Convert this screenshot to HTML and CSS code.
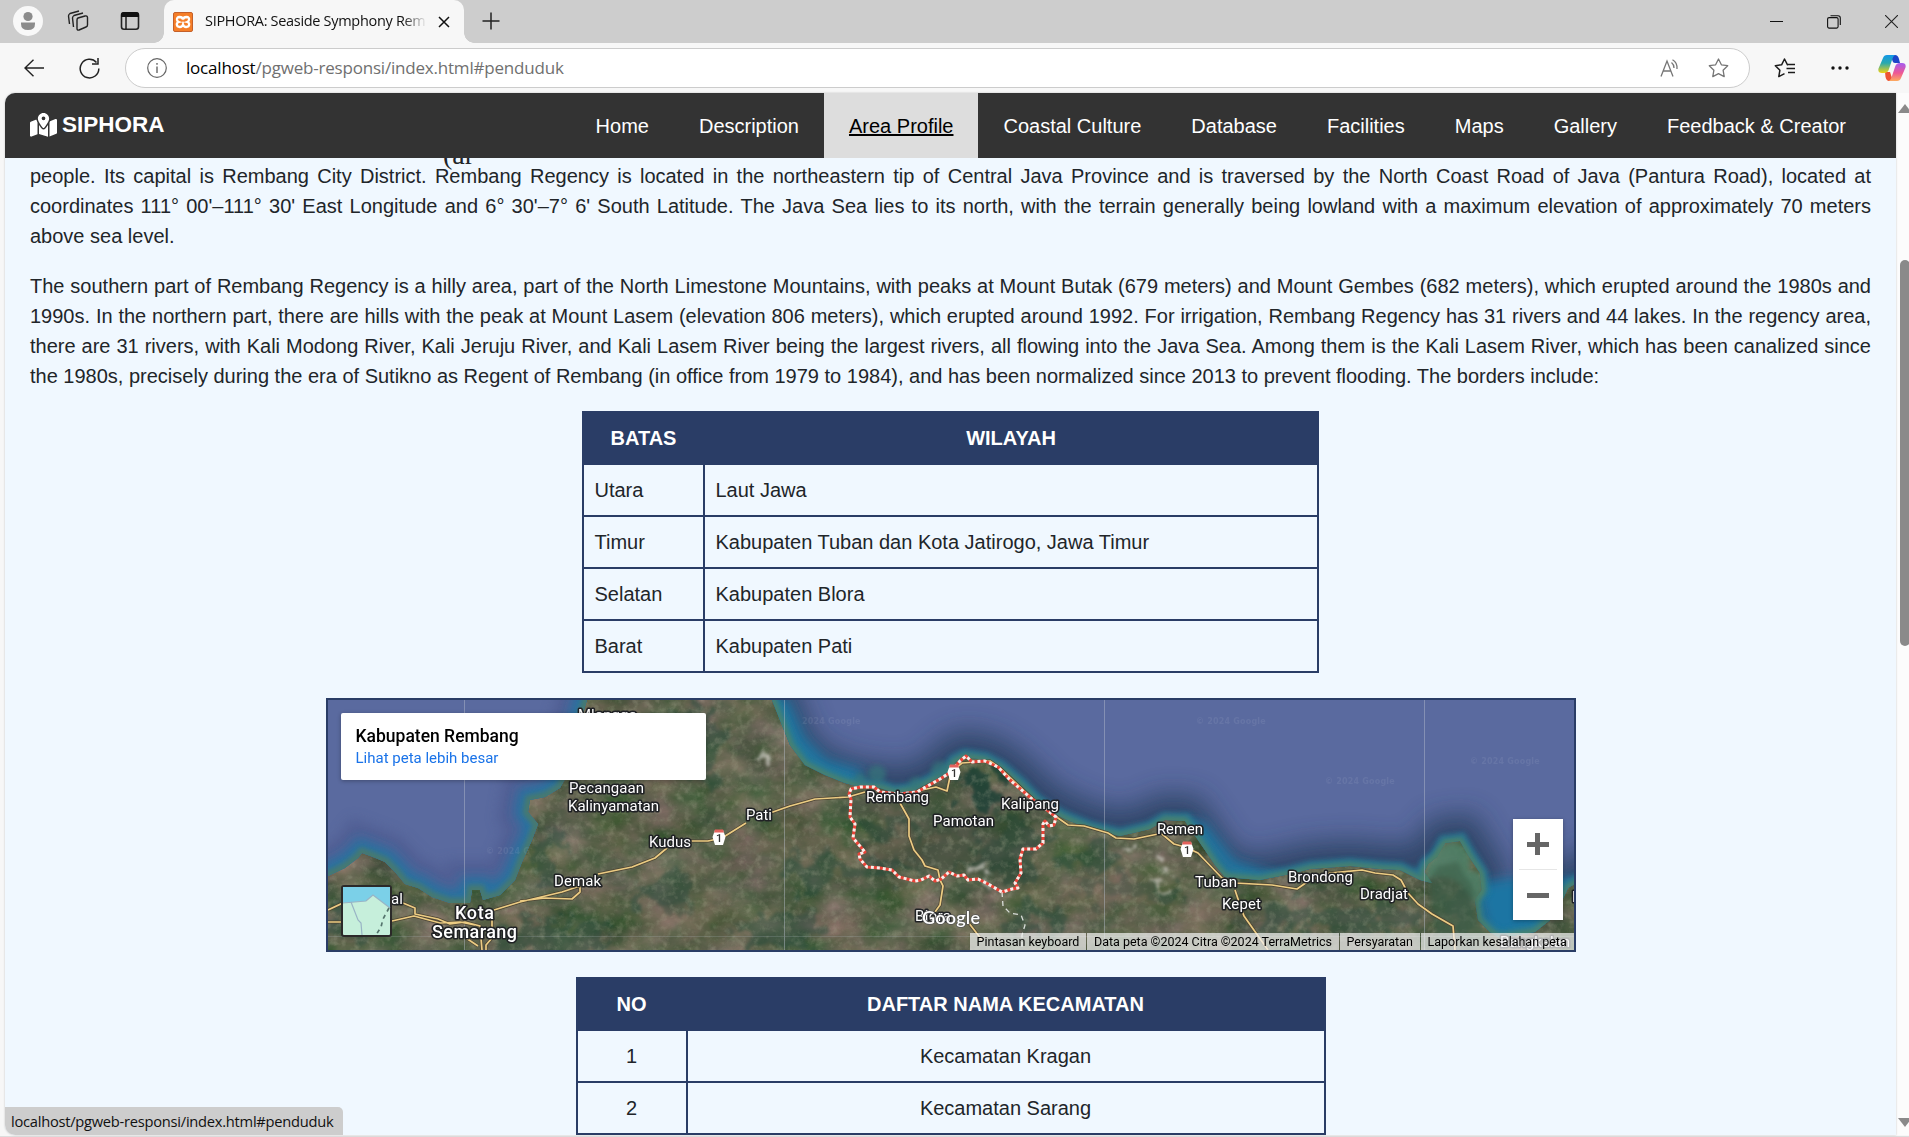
FILE: index.html
```html
<!DOCTYPE html>
<html lang="en">
<head>
<meta charset="utf-8">
<title>SIPHORA: Seaside Symphony Rembang</title>
<link rel="stylesheet" href="styles.css">
</head>
<body>
<header class="tabstrip">
  <div class="tab-tools">
    <svg class="avatar" width="30" height="30" viewBox="0 0 30 30"><circle cx="15" cy="15" r="15" fill="#f8f8f8"/><circle cx="15" cy="10.5" r="4.6" fill="#8c8c8c"/><path d="M8 16.5h14v1.5q0 6-7 6t-7-6z" fill="#8c8c8c"/></svg>
    <svg class="spaces" width="22" height="22" viewBox="0 0 22 22" fill="none" stroke="#222" stroke-width="1.4" stroke-linejoin="round"><path d="M11 8 18 6q2.300-.5 2.500 1.500V15q0 1.500-1.500 2l-7 3q-2 .5-2-1.500V10q0-1.500 1-2z"/><path d="M6.500 17 5.500 8Q5.500 6.500 7 5.500L16 3M2.500 14 1.500 6Q1.500 4.500 3 3.500L12 1"/></svg>
    <svg class="panel" width="20" height="20" viewBox="0 0 20 20"><rect x="1.500" y="1.800" width="17" height="16.500" rx="2.500" fill="none" stroke="#222" stroke-width="1.600"/><path d="M1 6V4q0-3 3-3h12q3 0 3 3v2zM5.300 6h1.400v12H5.300z" fill="#111"/></svg>
  </div>
  <div class="tab">
    <svg width="20" height="20" viewBox="0 0 20 20"><rect x=".5" y=".5" width="19" height="19" rx="1.500" fill="#f57e28" stroke="#c4602a"/><path d="M6.500 5q3 0 3.500 2.500Q10.500 5 13.500 5q3 .2 2.500 2.700-.3 1.800-1.800 2.300 2 .5 2 2.500-.2 2.500-3 2.500-2.500 0-3.200-2.500Q9.300 15 6.800 15q-2.800 0-3-2.500 0-2 2-2.500Q4.300 9.500 4 7.700 3.700 5.200 6.500 5z" fill="none" stroke="#fff" stroke-width="2.300"/></svg>
    <span class="tab-title">SIPHORA: Seaside Symphony Rem</span>
    <svg class="tab-close" width="12" height="12" viewBox="0 0 12 12" stroke="#111" stroke-width="1.500"><path d="M1 1 11 11M11 1 1 11"/></svg>
  </div>
  <svg class="new-tab" width="18" height="18" viewBox="0 0 18 18" stroke="#222" stroke-width="1.500"><path d="M9 .5v17M.5 9h17"/></svg>
  <div class="window-buttons">
    <svg width="13" height="13" viewBox="0 0 13 13" stroke="#111"><path d="M0 6.500h13"/></svg>
    <svg width="14" height="14" viewBox="0 0 14 14" fill="none" stroke="#111" stroke-width="1.100"><rect x=".6" y="2.600" width="10.500" height="10.500" rx="1.500"/><path d="M3.500.7H11q2.300 0 2.300 2.300v7"/></svg>
    <svg width="13" height="13" viewBox="0 0 13 13" stroke="#222" stroke-width="1.100"><path d="M0 0 13 13M13 0 0 13"/></svg>
  </div>
</header>
<div class="toolbar">
  <svg class="back" width="20" height="18" viewBox="0 0 20 18" fill="none" stroke="#222" stroke-width="1.400"><path d="M9.500.8 1 9l8.500 8.200M1 9h19"/></svg>
  <svg class="reload" width="21" height="21" viewBox="0 0 21 21" fill="none" stroke="#222" stroke-width="1.500"><path d="M19.800 10.500A9.300 9.300 0 1 1 17.500 4.500M19 0v6h-6"/></svg>
  <div class="address">
    <svg width="20" height="20" viewBox="0 0 20 20" fill="none" stroke="#666" stroke-width="1.200"><circle cx="10" cy="10" r="9.300"/><path d="M10 8.500V15M10 5v1.800" stroke-width="1.400"/></svg>
    <span class="url"><b>localhost</b>/pgweb-responsi/index.html#penduduk</span>
    <svg class="read" width="20" height="18" viewBox="0 0 20 18" fill="none" stroke="#767676" stroke-width="1.300"><path d="M1 17.500 7 2l6 15.500M3 12h8M11.500 3.500Q14 5.500 14 9M12.500.8Q17.500 3.500 17 10"/></svg>
    <svg class="star" width="21" height="20" viewBox="0 0 21 20" fill="none" stroke="#767676" stroke-width="1.300" stroke-linejoin="round"><path d="m10.500 1 2.900 5.800 6.300.9-4.600 4.500 1.100 6.400-5.700-3-5.700 3 1.100-6.400L1.300 7.700l6.300-.9z"/></svg>
  </div>
  <svg class="favorites" width="22" height="20" viewBox="0 0 22 20" fill="none" stroke="#1c1c1c" stroke-width="1.500" stroke-linejoin="round"><path d="M14 6.800h-.5L10.500 1 7.600 6.800l-6.300.9 4.600 4.500-1.100 6.400 5.700-3M14 6.500h7M12.500 10.500H21M14 14.500h7"/></svg>
  <svg class="more" width="18" height="4" viewBox="0 0 18 4" fill="#111"><circle cx="2" cy="2" r="1.700"/><circle cx="9" cy="2" r="1.700"/><circle cx="16" cy="2" r="1.700"/></svg>
  <svg class="copilot" width="28" height="26" viewBox="0 0 28 26">
    <defs>
      <linearGradient id="cool" x1="0" y1="0" x2="0" y2="1"><stop offset="0" stop-color="#1397e8"/><stop offset=".45" stop-color="#28a9ae"/><stop offset="1" stop-color="#f2d211"/></linearGradient>
      <linearGradient id="warm" x1="0" y1="0" x2="0" y2="1"><stop offset="0" stop-color="#a45cf0"/><stop offset=".55" stop-color="#ee5795"/><stop offset="1" stop-color="#fdab5e"/></linearGradient>
    </defs>
    <path d="M12 0h5q3 0 4 4l1 4h-5q-2 0-2.500-2L13 0z" fill="#1b45c8"/>
    <path d="M7 17h5l2 6q.6 2.500 2 3H11q-2.500 0-3.500-4z" fill="#ee5334"/>
    <path d="M9 0h8q-2 1-3 5l-3 9q-1 4-5 4H4q-4.500 0-3.500-4.500L5 3q1-3 4-3z" fill="url(#cool)"/>
    <path d="M19 26h-8q2-1 3-5l3-9q1-4 5-4h2q4.500 0 3.500 4.500L23 23q-1 3-4 3z" fill="url(#warm)"/>
  </svg>
</div>
<main class="viewport">
  <div class="page">
    <nav class="navbar">
      <a class="brand">
        <svg width="27" height="24" viewBox="0 0 576 512" fill="#fff"><path d="M408 120c0 54.600-73.100 151.900-105.200 192-7.700 9.600-22 9.600-29.600 0C241.100 271.900 168 174.600 168 120 168 53.700 221.700 0 288 0s120 53.700 120 120zm8 80.400c3.500-6.900 6.700-13.800 9.600-20.600.5-1.200 1-2.500 1.500-3.700l116-46.400c15.800-6.300 32.900 5.300 32.900 22.300v270.800c0 9.800-6 18.600-15.100 22.300L416 503V200.400zM137.600 138.300c2.400 14.100 7.200 28.300 12.800 41.500 2.900 6.800 6.100 13.700 9.600 20.600v251.400L32.900 502.700C17.100 509 0 497.400 0 480.400V209.600c0-9.800 6-18.600 15.100-22.300l122.600-49zM327.800 332c13.900-17.400 35.700-45.700 56.200-77v249.300l-192-54.900V255c20.500 31.300 42.300 59.600 56.200 77 20.500 25.600 59.100 25.600 79.600 0zM288 152a40 40 0 1 0 0-80 40 40 0 1 0 0 80z"/></svg>
        SIPHORA</a>
      <a>Home</a><a>Description</a><a class="active">Area Profile</a><a>Coastal Culture</a><a>Database</a><a>Facilities</a><a>Maps</a><a>Gallery</a><a>Feedback &amp; Creator</a>
    </nav>
    <article class="content">
      <span class="script-word">(ar</span>
      <p>people. Its capital is Rembang City District. Rembang Regency is located in the northeastern tip of Central Java Province and is traversed by the North Coast Road of Java (Pantura Road), located at coordinates 111° 00'–111° 30' East Longitude and 6° 30'–7° 6' South Latitude. The Java Sea lies to its north, with the terrain generally being lowland with a maximum elevation of approximately 70 meters above sea level.</p>
      <p>The southern part of Rembang Regency is a hilly area, part of the North Limestone Mountains, with peaks at Mount Butak (679 meters) and Mount Gembes (682 meters), which erupted around the 1980s and 1990s. In the northern part, there are hills with the peak at Mount Lasem (elevation 806 meters), which erupted around 1992. For irrigation, Rembang Regency has 31 rivers and 44 lakes. In the regency area, there are 31 rivers, with Kali Modong River, Kali Jeruju River, and Kali Lasem River being the largest rivers, all flowing into the Java Sea. Among them is the Kali Lasem River, which has been canalized since the 1980s, precisely during the era of Sutikno as Regent of Rembang (in office from 1979 to 1984), and has been normalized since 2013 to prevent flooding. The borders include:</p>
      <table class="borders">
        <colgroup><col class="side"><col></colgroup>
        <thead><tr><th>BATAS</th><th>WILAYAH</th></tr></thead>
        <tbody>
          <tr><td>Utara</td><td>Laut Jawa</td></tr>
          <tr><td>Timur</td><td>Kabupaten Tuban dan Kota Jatirogo, Jawa Timur</td></tr>
          <tr><td>Selatan</td><td>Kabupaten Blora</td></tr>
          <tr><td>Barat</td><td>Kabupaten Pati</td></tr>
        </tbody>
      </table>
      <section class="map">
        <svg class="tiles" width="1246" height="250" viewBox="328 700 1246 250">
          <defs>
            <filter id="relief" x="0" y="0" width="100%" height="100%" color-interpolation-filters="sRGB"><feTurbulence type="fractalNoise" baseFrequency=".022 .032" numOctaves="7" seed="8"/><feColorMatrix values=".46 0 0 0 .13  .2 .1 0 0 .235  .32 0 .06 0 .105  0 0 0 0 1"/></filter>
            <filter id="grain" x="0" y="0" width="100%" height="100%" color-interpolation-filters="sRGB"><feTurbulence type="fractalNoise" baseFrequency=".13" numOctaves="4" seed="21"/><feColorMatrix values="0 0 0 0 .65  0 0 0 0 .66  0 0 0 0 .56  0 2.400 0 0 -1.150"/></filter>
            <filter id="soft3" x="-20%" y="-20%" width="140%" height="140%"><feGaussianBlur stdDeviation="2.500"/></filter>
            <filter id="soft8" x="-20%" y="-20%" width="140%" height="140%"><feGaussianBlur stdDeviation="6"/></filter>
            <filter id="soft16" x="-20%" y="-20%" width="140%" height="140%"><feGaussianBlur stdDeviation="13"/></filter>
            <filter id="patch" x="-5%" y="-20%" width="110%" height="140%" color-interpolation-filters="sRGB"><feTurbulence type="fractalNoise" baseFrequency=".045" numOctaves="5" result="n"/><feDisplacementMap in="SourceGraphic" in2="n" scale="55" xChannelSelector="R" yChannelSelector="G"/><feGaussianBlur stdDeviation="1.800"/></filter>
            <path id="west" d="M150 930 328 876 345 868 358 858 362 853 373 857 385 862 395 872 405 884 418 888 432 897 450 903 470 903 472 890 480 890 483 900 500 895 515 880 522 862 532 840 538 824 528 812 530 800 545 797 560 788 570 770 578 730 587 700 600 500 150 500z"/>
            <path id="east" d="M740 500 770 695 778 715 790 745 805 765 825 775 845 783 860 787 880 788 895 793 915 790 930 782 948 773 955 762 965 757 985 760 1000 768 1020 785 1035 801 1050 811 1065 819 1090 829 1120 836 1150 829 1165 820 1185 821 1198 840 1215 865 1225 877 1260 880 1290 874 1310 869 1350 866 1380 869 1400 870 1420 880 1432 883 1424 872 1428 864 1437 857 1445 843 1460 841 1468 855 1480 873 1482 890 1475 900 1478 920 1490 932 1500 938 1535 932 1550 920 1560 905 1568 888 1590 875 1750 860V500z"/>
            <path id="roads" d="M328 910 345 902M328 922H342M392 921 414 916 440 923 460 922 475 925M403 903 415 908 415 914 438 919 450 924 465 922 480 926 482 950M494 910 520 902 562 892 580 886 580 892 572 899 545 898 520 901M492 920V938L486 945V955M466 938 478 946M598 874 632 867 655 858 667 848M690 841 708 841 722 838 746 823M770 813 790 806 808 801 815 799 848 797 865 792M900 803 909 819 909 836 914 850 922 860 925 866 938 870 940 880 943 886 940 905 935 912M917 791 936 787 947 791 951 772 962 763 990 761 1000 768 1033 799 1058 818 1068 825 1084 826 1108 833 1116 838 1134 839 1158 834M1162 834 1174 844 1185 847 1198 853 1222 878 1235 883 1272 885 1297 889 1310 880 1330 873 1362 870 1375 873 1393 875 1401 880 1408 893 1418 904 1432 914 1453 926 1455 950M1235 890 1240 905 1244 916 1268 950M968 922 982 940"/>
            <path id="boundary" d="M951 772 960 761 966 756 972 762 985 761 998 767 1010 780 1032 799 1047 810 1056 817 1054 825 1049 826 1045 821 1043 824 1043 843 1036 849 1023 849 1020 859 1021 873 1015 883 1018 888 1012 889 1002 892 988 884 978 879 968 880 964 875 957 876 949 872 941 879 935 881 929 876 921 880 915 881 899 877 892 870 880 868 867 867 860 859 859 854 865 852 859 845 853 838 855 824 850 817 851 799 849 794 851 789 860 787 874 787 880 792 899 794 917 792 940 779z"/>
            <clipPath id="west-clip"><use href="#west"/></clipPath>
            <clipPath id="east-clip"><use href="#east"/></clipPath>
            <g id="shield"><path d="M-4-7h8l2.500 7L4 8h-8l-2.500-8z" fill="#fff"/><path d="M-4-7.500h8l1 3H-5z" fill="#e3625c"/><text class="shield-no" y="4.500">1</text></g>
          </defs>
          <rect x="328" y="700" width="1246" height="250" filter="url(#relief)"/>
          <g fill="#234a3c" opacity=".42" filter="url(#patch)">
            <ellipse cx="700" cy="745" rx="25" ry="40"/><ellipse cx="675" cy="735" rx="34" ry="22"/><ellipse cx="955" cy="855" rx="45" ry="14"/><ellipse cx="1012" cy="850" rx="28" ry="32"/><ellipse cx="890" cy="830" rx="40" ry="14"/><ellipse cx="860" cy="870" rx="70" ry="8"/><ellipse cx="812" cy="870" rx="26" ry="18"/><ellipse cx="1090" cy="860" rx="30" ry="15"/><ellipse cx="1130" cy="890" rx="50" ry="12"/><ellipse cx="550" cy="940" rx="60" ry="18"/><ellipse cx="350" cy="925" rx="24" ry="18"/><ellipse cx="670" cy="895" rx="32" ry="20"/><ellipse cx="1330" cy="920" rx="100" ry="15"/><ellipse cx="545" cy="860" rx="13" ry="26"/><ellipse cx="1460" cy="910" rx="15" ry="28"/><ellipse cx="780" cy="930" rx="50" ry="14"/><ellipse cx="1030" cy="920" rx="35" ry="12"/>
          </g>
          <path d="M851 789 917 792 966 760 1056 817 1020 860 1015 885 920 878 865 865z" fill="#273d30" opacity=".28" filter="url(#patch)"/>
          <g fill="#123c31" filter="url(#patch)" opacity=".7"><ellipse cx="980" cy="787" rx="26" ry="25"/></g>
          <g fill="#7c6755" opacity=".25" filter="url(#patch)"><ellipse cx="803" cy="840" rx="40" ry="18"/><ellipse cx="920" cy="850" rx="50" ry="18"/><ellipse cx="1110" cy="890" rx="45" ry="25"/><ellipse cx="690" cy="920" rx="60" ry="18"/><ellipse cx="1210" cy="915" rx="45" ry="16"/></g>
          <rect x="328" y="700" width="1246" height="250" filter="url(#grain)" opacity=".35"/>
          <g fill="#d7d4ce" opacity=".65" filter="url(#patch)"><ellipse cx="765" cy="756" rx="5" ry="9"/><ellipse cx="980" cy="872" rx="8" ry="7"/><path d="M1148 870l24 9-4 5-20-7z"/><ellipse cx="1136" cy="852" rx="9" ry="3"/></g>
          <g clip-path="url(#west-clip)"><rect x="328" y="700" width="275" height="250" fill="#5a6a9f"/><use href="#west" fill="none" stroke="#4a568c" stroke-width="60" opacity=".5" filter="url(#soft8)"/><use href="#west" fill="none" stroke="#2375a3" stroke-width="26" opacity=".9" filter="url(#soft8)"/><use href="#west" fill="none" stroke="#47796f" stroke-width="10" filter="url(#soft3)"/></g>
          <g clip-path="url(#east-clip)"><rect x="760" y="690" width="830" height="260" fill="#5a6a9f"/><use href="#east" fill="none" stroke="#283c5b" stroke-width="52" opacity=".78" filter="url(#soft16)"/><path d="M1475 885q35-12 100-6v55l-85 10z" fill="#1e75a3" filter="url(#soft8)"/><path d="M1180 818l50 62 65 0-60-20-30-38z" fill="#2175a0" filter="url(#soft8)"/><path d="M775 700l20 45 25 25 40 12" fill="none" stroke="#2175a0" stroke-width="26" filter="url(#soft8)"/><use href="#east" fill="none" stroke="#257a96" stroke-width="16" opacity=".85" filter="url(#soft3)"/><use href="#east" fill="none" stroke="#4b826c" stroke-width="7" filter="url(#soft3)"/><g fill="#35777b" opacity=".7" filter="url(#soft3)"><circle cx="877" cy="774" r="9"/><circle cx="940" cy="770" r="9"/><circle cx="860" cy="779" r="6"/><circle cx="916" cy="784" r="7"/></g></g>
          <path d="M1424 882l4-18 12-17q14-10 25 1 8 10 4 22l10 2q8 12 2 24l-6 10q-15-33-40-29z" fill="#4d8068" opacity=".85" filter="url(#soft3)"/>
          <path d="M1430 880l8-14 20-4 7 14 8 10 5 35 20 30h-60l-8-55z" fill="#3d5f4a" opacity=".6" filter="url(#soft3)"/>
          <g stroke="#b9c1cf" opacity=".45"><path d="M464.500 700v250M784.500 700v250M1104.500 700v250M1424.500 700v250"/><path d="M328 936.500h1246" opacity=".45"/></g>
          <g class="watermark"><text x="802" y="724">2024 Google</text><text x="1196" y="724">© 2024 Google</text><text x="1325" y="784">© 2024 Google</text><text x="1470" y="764">© 2024 Google</text><text x="486" y="854">© 2024 G</text></g>
          <use href="#roads" class="road-case"/><use href="#roads" class="road-core"/>
          <use href="#boundary" class="boundary-line"/><use href="#boundary" class="boundary-dash"/>
          <path d="M1002 892l1 14 7 7 11 2 4 10-3 10v15" fill="none" stroke="#d9ddd9" stroke-width="1.300" stroke-dasharray="5 4"/>
          <use href="#shield" x="719" y="837"/><use href="#shield" x="954" y="772"/><use href="#shield" x="1187" y="849"/>
          <g class="places">
            <text x="578" y="720" textLength="59">Mlonggo</text><text x="569" y="793" textLength="75">Pecangaan</text><text x="568" y="811" textLength="91">Kalinyamatan</text><text x="649" y="847" textLength="42">Kudus</text><text x="554" y="886" textLength="47">Demak</text><text x="391" y="904">al</text><text x="746" y="820" textLength="26">Pati</text><text x="866" y="802" textLength="63">Rembang</text><text x="933" y="826" textLength="61">Pamotan</text><text x="1001" y="809" textLength="58">Kalipang</text><text x="915" y="921" textLength="36">Blora</text><text x="1157" y="834" textLength="46">Remen</text><text x="1195" y="887" textLength="42">Tuban</text><text x="1222" y="909" textLength="39">Kepet</text><text x="1288" y="882" textLength="65">Brondong</text><text x="1360" y="899" textLength="48">Dradjat</text><text x="1572" y="902">K</text><text x="1500" y="947">Bangkalan</text>
            <text class="city" x="455" y="919" textLength="39">Kota</text><text class="city" x="432" y="938" textLength="85">Semarang</text>
          </g>
          <text class="google" x="922" y="924" textLength="58">Google</text>
        </svg>
        <div class="place-card"><strong>Kabupaten Rembang</strong><a>Lihat peta lebih besar</a></div>
        <svg class="map-type" width="51" height="52" viewBox="0 0 51 52"><rect x="1" y="1" width="49" height="50" rx="2" fill="#c6efdb" stroke="#2b2929" stroke-width="2"/><path d="M2 2h47v21L32 10l-7 6-23 2z" fill="#7bd0e8"/><path d="M2 18l23-2 7-6 17 13M10 17l7 18 3 3 1 12" fill="none" stroke="#99b4c5" stroke-width="1.200"/><path d="M48 23l-6 11-2 8-5 8" fill="none" stroke="#55746d" stroke-width="1.700" stroke-dasharray="4 4"/></svg>
        <div class="zoom"><i class="plus"></i><i class="minus"></i></div>
        <div class="credits"><span>Pintasan keyboard</span><span>Data peta ©2024 Citra ©2024 TerraMetrics</span><span>Persyaratan</span><span>Laporkan kesalahan peta</span></div>
      </section>
      <table class="districts">
        <colgroup><col class="number"><col></colgroup>
        <thead><tr><th>NO</th><th>DAFTAR NAMA KECAMATAN</th></tr></thead>
        <tbody>
          <tr><td>1</td><td>Kecamatan Kragan</td></tr>
          <tr><td>2</td><td>Kecamatan Sarang</td></tr>
          <tr><td></td><td></td></tr>
        </tbody>
      </table>
    </article>
    <div class="status">localhost/pgweb-responsi/index.html#penduduk</div>
  </div>
  <div class="scrollbar"><i class="up"></i><i class="thumb"></i><i class="down"></i></div>
</main>
</body>
</html>
```
FILE: styles.css
```css
* { box-sizing: border-box; }
body { margin: 0; width: 1909px; height: 1137px; overflow: hidden; display: flex; flex-direction: column; background: #f7f7f7; font-family: "Liberation Sans", Arial, sans-serif; }
svg { display: block; flex: none; }

.tabstrip { height: 43px; flex: none; display: flex; background: #cdcdcd; }
.tab-tools { width: 164px; display: flex; align-items: center; padding: 0 0 1px 13px; }
.spaces { margin-left: 24px; }
.panel { margin-left: 31px; }
.tab { position: relative; width: 300px; padding: 0 14px 0 9px; display: flex; align-items: center; background: #f7f7f7; border-radius: 10px 10px 0 0; }
.tab::before, .tab::after { content: ""; position: absolute; bottom: 0; width: 10px; height: 10px; }
.tab::before { left: -10px; background: radial-gradient(circle at 0 0, transparent 9.5px, #f7f7f7 10px); }
.tab::after { right: -10px; background: radial-gradient(circle at 100% 0, transparent 9.5px, #f7f7f7 10px); }
.tab-title { width: 223px; margin: 0 11px 2px 12px; overflow: hidden; white-space: nowrap; font: 14.5px "Open Sans", sans-serif; letter-spacing: -.31px; color: #111; mask-image: linear-gradient(90deg, #000 89%, transparent); }
.new-tab { margin: 12px 0 0 18px; }
.window-buttons { margin-left: auto; padding-right: 11px; display: flex; align-items: center; gap: 44px; }

.toolbar { height: 50px; flex: none; display: flex; align-items: center; padding-left: 24px; }
.reload { margin-left: 35px; }
.address { width: 1625px; height: 40px; margin-left: 25px; display: flex; align-items: center; padding: 0 20px 0 21px; border: 1px solid #ccc; border-radius: 20px; background: #fff; }
.url { margin: 0 auto 1px 19px; font: 17px "Open Sans", sans-serif; letter-spacing: -.2px; color: #707070; white-space: nowrap; }
.url b { font-weight: 400; color: #000; }
.star { margin-left: 28px; }
.favorites { margin-left: 24px; }
.more { margin-left: 35px; }
.copilot { margin-left: 29px; }

.viewport { flex: 1; min-height: 0; padding: 0 0 1px 5px; display: flex; border-bottom: 1px solid #ddd; }
.page { position: relative; width: 1891px; flex: none; overflow: hidden; background: #f0f8ff; border-radius: 10px 0 0 10px; box-shadow: 0 0 2px #bbb; color: #212529; font-size: 20px; line-height: 30px; }
.navbar { position: relative; z-index: 1; height: 65px; padding-right: 25px; display: flex; background: #333; color: #fff; }
.navbar a { padding: 0 25px; line-height: 66px; }
.navbar .brand { margin-right: auto; padding: 0 25px 2px; display: flex; align-items: center; gap: 5px; font-weight: 700; font-size: 22.5px; line-height: 60px; }
.navbar .active { background: #ddd; color: #000; text-decoration: underline; text-decoration-thickness: 2px; }
.content { padding: 3px 25px 0; }
.script-word { position: absolute; left: 438px; top: 45px; font: 28px/34px "Liberation Serif", serif; }
p { margin: 0 0 20px; text-align: justify; }

table { margin: 0 auto; border-collapse: collapse; table-layout: fixed; background: #f0f8ff; }
.borders { width: 737px; }
.side { width: 121px; }
.districts { width: 750px; }
.number { width: 110px; }
th, td { height: 52px; padding: 0 11px 0 10.5px; border: 2px solid #2a3d66; }
th { background: #2a3d66; color: #fff; padding: 0 10px; }
.districts td { text-align: center; padding: 0 10px; }

.map { position: relative; width: 1250px; height: 254px; margin: 25px auto; border: 2px solid #2a3d66; overflow: hidden; font-family: Roboto, sans-serif; }
.road-case, .road-core, .boundary-line, .boundary-dash { fill: none; stroke-linejoin: round; }
.road-case { stroke: #4b4332; stroke-width: 3.2px; }
.road-core { stroke: #eccc83; stroke-width: 1.7px; }
.boundary-line { stroke: #ea4438; stroke-width: 3px; }
.boundary-dash { stroke: #f5efec; stroke-width: 3px; stroke-dasharray: 3 3; }
.shield-no { font: 500 11px Roboto, sans-serif; fill: #333; text-anchor: middle; }
.watermark { font: 700 8px "DejaVu Sans", sans-serif; fill: #c8cee0; opacity: .11; letter-spacing: .2px; }
.places { font-size: 15px; fill: #fff; stroke: #202225; stroke-width: 3.2px; stroke-linejoin: round; paint-order: stroke; }
.city { font-size: 18px; font-weight: 500; }
.google { font: 600 18px Lato, sans-serif; fill: #fff; stroke: #555; stroke-width: 1.5px; paint-order: stroke; }
.place-card { position: absolute; left: 13px; top: 13px; width: 365px; height: 67px; padding: 13px 15px; display: flex; flex-direction: column; background: #fff; border-radius: 2px; box-shadow: 0 1px 4px rgba(0,0,0,.3); line-height: 21px; }
.place-card strong { font-size: 17.5px; font-weight: 500; color: #000; }
.place-card a { font-size: 15px; color: #1a73e8; line-height: 23px; }
.map-type { position: absolute; left: 13px; top: 185px; }
.zoom { position: absolute; right: 11px; top: 119px; width: 50px; height: 101px; background: #fff; box-shadow: 0 1px 4px rgba(0,0,0,.3); display: flex; flex-direction: column; }
.zoom i { flex: 1; margin: 0 6px; background: linear-gradient(#666, #666) center / 22px 5px no-repeat; }
.zoom .plus { border-bottom: 1px solid #e6e6e6; background: linear-gradient(#666, #666) center / 22px 5px no-repeat, linear-gradient(#666, #666) center / 5px 22px no-repeat; }
.credits { position: absolute; right: 0; bottom: 0; height: 17px; display: flex; gap: 1px; font-size: 12.5px; line-height: 17px; color: #000; white-space: nowrap; }
.credits span { padding: 0 6.8px; background: rgba(245,245,245,.7); }

.status { position: absolute; left: 0; bottom: 0; width: 338px; height: 28px; padding-left: 6px; background: #cdcdcd; border-radius: 0 5px 0 9px; font: 14.7px/28px "Open Sans", sans-serif; letter-spacing: -.26px; color: #111; }
.scrollbar { width: 13px; display: flex; flex-direction: column; align-items: center; padding: 11px 0 8px 3px; background: #fcfcfc; overflow: hidden; }
.scrollbar i { flex: none; }
.up, .down { margin-left: 2px; border: 7px solid transparent; }
.up { border-top: 0; border-bottom: 9px solid #8a8a8a; }
.down { margin-top: auto; border-bottom: 0; border-top: 9px solid #8a8a8a; }
.thumb { width: 10px; height: 386px; margin-top: 147px; margin-left: 1px; border-radius: 5px; background: #8a8a8a; }
```
